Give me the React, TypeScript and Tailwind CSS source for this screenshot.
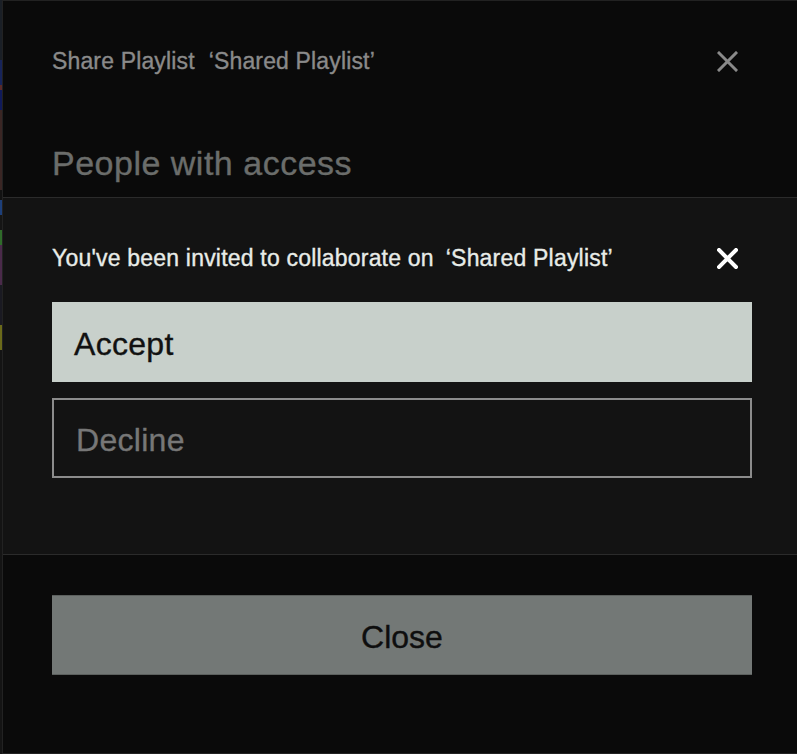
import React from 'react';

const strip = [
  { h: 'h-[60px]', c: 'bg-[#1a1f26]' },
  { h: 'h-[25px]', c: 'bg-[#17245a]' },
  { h: 'h-[5px]', c: 'bg-[#5a2a2a]' },
  { h: 'h-[20px]', c: 'bg-[#101a5a]' },
  { h: 'h-[80px]', c: 'bg-[#3a2624]' },
  { h: 'h-[10px]', c: 'bg-[#121212]' },
  { h: 'h-[15px]', c: 'bg-[#1d3f7a]' },
  { h: 'h-[15px]', c: 'bg-[#151515]' },
  { h: 'h-[15px]', c: 'bg-[#2f6b2a]' },
  { h: 'h-[40px]', c: 'bg-[#4a2a4a]' },
  { h: 'h-[40px]', c: 'bg-[#1a1a22]' },
  { h: 'h-[25px]', c: 'bg-[#6b6a1a]' },
  { h: 'h-[404px]', c: 'bg-[#141414]' },
];

function XIcon({ color, stroke }: { color: string; stroke: number }) {
  return (
    <svg width="21" height="21" viewBox="0 0 21 21" fill="none">
      <path d="M2 2L19 19M19 2L2 19" stroke={color} strokeWidth={stroke} strokeLinecap="square" />
    </svg>
  );
}

export default function App() {
  return (
    <div className="flex h-[754px] w-[797px] overflow-hidden bg-black font-['Liberation_Sans',Arial,sans-serif] [-webkit-text-stroke:0.35px_currentColor]">
      <div className="flex w-[2px] shrink-0 flex-col">
        {strip.map((s, i) => (
          <div key={i} className={`${s.h} ${s.c} w-full`} />
        ))}
      </div>
      <div className="flex h-[754px] flex-1 flex-col border-y border-l border-[#222222] bg-[#0a0a0a]">
        {/* header */}
        <div className="ml-[49px] mt-[46px] flex h-[28px] w-[686px] items-center justify-between">
          <div className="text-[23px] leading-[28px] tracking-[0.15px] text-[#8a8a8a]">
            Share Playlist<span className="ml-[14px]">‘Shared Playlist’</span>
          </div>
          <XIcon color="#8a8a8a" stroke={3} />
        </div>
        <h2 className="ml-[49px] mt-[68px] h-[40px] text-[34px] leading-[40px] tracking-[0.5px] text-[#6b6d6b]">
          People with access
        </h2>

        {/* invitation panel */}
        <div className="mt-[14px] border-y border-[#2b2b2b] bg-[#131313] pb-[76px] pl-[49px] pt-[46px]">
          <div className="flex h-[28px] w-[686px] items-center justify-between">
            <div className="text-[23px] leading-[28px] tracking-[0.2px] text-[#e8ece8]">
              You've been invited to collaborate on<span className="ml-[12px]">‘Shared Playlist’</span>
            </div>
            <XIcon color="#ffffff" stroke={4} />
          </div>
          <button className="mt-[30px] flex h-[80px] w-[700px] items-center bg-[#c8d0cb] pl-[22px] pt-[3px] text-[32px] leading-[40px] tracking-[0.3px] text-[#111111]">
            Accept
          </button>
          <button className="mt-[16px] flex h-[80px] w-[700px] items-center border-2 border-[#8c8c8c] pl-[22px] pt-[3px] text-[32px] leading-[40px] tracking-[0.3px] text-[#777777]">
            Decline
          </button>
        </div>

        <button className="ml-[49px] mt-[40px] flex h-[80px] w-[700px] items-center justify-center border-y border-[#5c605e] bg-[#737876] pt-[3px] text-[32px] leading-[40px] text-[#0e0e0e]">
          Close
        </button>
      </div>
    </div>
  );
}
